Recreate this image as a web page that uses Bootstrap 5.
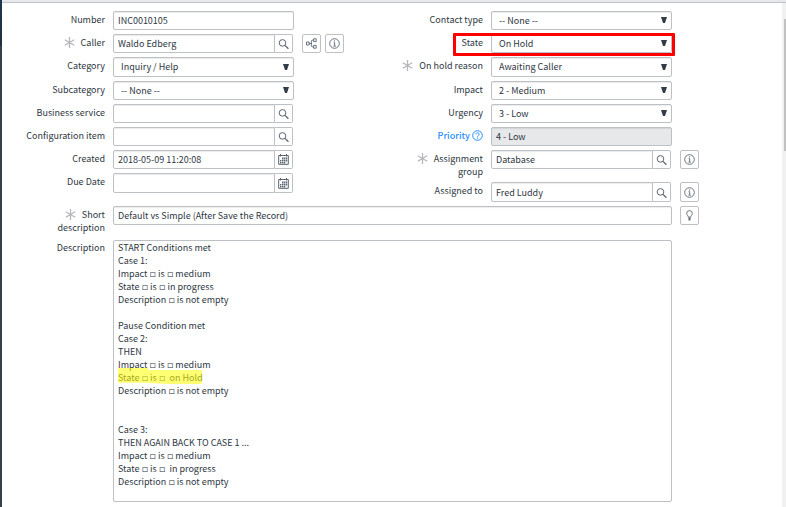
<!DOCTYPE html>
<html lang="en">
<head>
<meta charset="utf-8">
<meta name="viewport" content="width=device-width, initial-scale=1">
<title>Incident INC0010105</title>
<link href="https://cdn.jsdelivr.net/npm/bootstrap@5.3.0/dist/css/bootstrap.min.css" rel="stylesheet">
<style>
:root { --ink: #2e3742; --line: #bdc0c4; --glyph: #5a6570; }
body { font-family: "Noto Sans CJK SC", "DejaVu Sans", sans-serif; font-size: 9px; line-height: 13px; color: var(--ink); background: #fff; }
.edge-left { width: 2px; background: linear-gradient(#1d3650 0, #22303f 46px, #34424e 46px); }
.top-strip { height: 3px; background: #e6e8ea; border-bottom: 1px solid #bfc3cb; }
.scroll-track { width: 4px; background: #f1f1f1; padding: 16px 0 0 2px; }
.scroll-thumb { height: 132px; background: #c1c1c1; }
.record { padding-top: 8px; }
.columns { padding-right: 24px; }
.field { display: grid; grid-template-columns: 103px minmax(0, 1fr) 78px; column-gap: 8px; align-items: start; margin-bottom: 4px; position: relative; }
.field-wide { grid-template-columns: 103px minmax(0, 1fr) 102px; margin-bottom: 6px; }
.field > label, .field > .label-cell { text-align: right; padding-top: 2px; }
.field > .label-top { padding-top: 1px; }
.ctl { display: block; width: 100%; height: 19px; padding: 0 4px; border: 1px solid var(--line); border-radius: 2px; color: var(--ink); background-color: #fff; font: inherit; line-height: 13px; box-shadow: inset 0 1px 1px rgba(0,0,0,.08); }
.ctl:disabled { background-color: #e6e8ea; opacity: 1; }
select.ctl { appearance: none; padding-left: 7px; padding-bottom: 1px; background-image: url("data:image/svg+xml,%3Csvg xmlns='http://www.w3.org/2000/svg' viewBox='0 0 6 6'%3E%3Cpath d='M0 0h6L4 6H2z' fill='%23343d47'/%3E%3C/svg%3E"); background-repeat: no-repeat; background-size: 6px 6px; background-position: right 4px top 5px; }
.tall .ctl, .tall .icon-btn { height: 20px; }
.tall select.ctl { padding-bottom: 2px; background-position: right 4px top 6px; }
.lookup { margin-right: 1px; }
.lookup .ctl { border-radius: 2px 0 0 2px; }
.icon-btn { width: 19px; height: 19px; padding: 0; border: 1px solid var(--line); border-radius: 2px; background: #fff; color: var(--glyph); display: flex; align-items: center; justify-content: center; flex: none; }
.lookup .icon-btn { width: 18px; border-left: 0; border-radius: 0 2px 2px 0; }
.icon-btn svg { display: block; fill: none; stroke: currentColor; }
.req { width: 11px; height: 11px; stroke: #b4b7bb; fill: none; margin-right: 6px; vertical-align: -2px; }
.help-link { color: #278efc; text-decoration: none; font-weight: 500; }
.help-link svg { width: 11px; height: 11px; fill: none; stroke: currentColor; vertical-align: -2px; }
.callout-box { position: absolute; left: 73px; right: 83px; top: -1px; height: 23px; border: 3px solid #f00; border-radius: 1px; pointer-events: none; }
textarea.ctl { height: auto; resize: none; overflow: hidden; box-shadow: none; }
.marker { position: absolute; left: 5px; top: 128px; width: 84px; height: 16px; background: rgba(255,255,0,.55); pointer-events: none; clip-path: polygon(0 0, 36% 0, 36% 12%, 100% 12%, 100% 100%, 60% 100%, 30% 92%, 0 92%); }
</style>
</head>
<body>
<svg width="0" height="0" class="d-none" aria-hidden="true">
  <symbol id="i-star" viewBox="0 0 11 11"><path d="M5.5 0v11M.8 2.7l9.4 5.6M10.2 2.7L.8 8.3" stroke-width="1.3"/></symbol>
  <symbol id="i-search" viewBox="0 0 11 11"><circle cx="4.5" cy="4.9" r="3.3"/><path d="M7 7.4l3.4 3.4" stroke-width="1.3"/></symbol>
  <symbol id="i-info" viewBox="0 0 11 11"><circle cx="5.5" cy="5.5" r="4.8" stroke-width=".9"/><path d="M5.5 2.4v1.2M4.6 4.7h1.1v3.2M4.4 8.1h2.4" stroke-width=".9"/></symbol>
  <symbol id="i-tree" viewBox="0 0 11 11"><path d="M.5 4h2.6v3H.5zM7.6.8h2.6v2.8H7.6zM7.6 7.4h2.6v2.8H7.6zM3.1 5.5h2.2M7.6 2.2H6.4q-1 0-1 1v4.6q0 1 1 1h1.2" stroke-width=".9"/></symbol>
  <symbol id="i-cal" viewBox="0 0 11 11"><path d="M.7 1.5h9.6v8.8H.7zM2.5 0v2.5M8.5 0v2.5" stroke-width="1"/><path d="M4.7 3.5v2M6.6 3.5v2M8.5 3.5v2M2.7 6v1.4M4.7 6v1.4M6.6 6v1.4M8.5 6v1.4M2.7 8v1.4M4.7 8v1.4M6.6 8v1.4" stroke-width="1.4"/></symbol>
  <symbol id="i-bulb" viewBox="0 0 11 11"><path d="M4.3 7.2C4.3 5.5 2.7 5.2 2.7 3.4a2.8 2.8 0 0 1 5.6 0C8.3 5.2 6.7 5.5 6.7 7.2z" stroke-width=".9"/><path d="M5.5 7.5v3" stroke-width="2"/></symbol>
  <symbol id="i-help" viewBox="0 0 11 11"><circle cx="5.5" cy="5.5" r="4.8"/><path d="M3.9 4.4c0-2 3.3-2 3.3 0 0 1.2-1.7 1.1-1.7 2.4M5.5 7.6v1.1"/></symbol>
</svg>
<div class="d-flex min-vh-100">
  <div class="edge-left flex-shrink-0"></div>
  <div class="d-flex flex-column flex-grow-1">
    <div class="top-strip"></div>
    <div class="d-flex flex-grow-1">
      <form class="record flex-grow-1">
        <div class="columns row g-0">
          <div class="col-6">
            <div class="field"><label for="number">Number</label><input class="ctl" id="number" value="INC0010105"></div>
            <div class="field"><label for="caller"><svg class="req"><use href="#i-star"/></svg>Caller</label>
              <div class="lookup d-flex"><input class="ctl" id="caller" value="Waldo Edberg"><button type="button" class="icon-btn" aria-label="Look up caller"><svg width="11" height="11"><use href="#i-search"/></svg></button></div>
              <div class="d-flex gap-1"><button type="button" class="icon-btn" aria-label="Show related incidents"><svg width="11" height="11"><use href="#i-tree"/></svg></button><button type="button" class="icon-btn" aria-label="Preview caller"><svg width="11" height="11"><use href="#i-info"/></svg></button></div></div>
            <div class="field tall"><label for="category">Category</label><select class="ctl" id="category"><option>Inquiry / Help</option></select></div>
            <div class="field"><label for="subcategory">Subcategory</label><select class="ctl" id="subcategory"><option>-- None --</option></select></div>
            <div class="field"><label for="service">Business service</label>
              <div class="lookup d-flex"><input class="ctl" id="service"><button type="button" class="icon-btn" aria-label="Look up business service"><svg width="11" height="11"><use href="#i-search"/></svg></button></div></div>
            <div class="field"><label for="ci">Configuration item</label>
              <div class="lookup d-flex"><input class="ctl" id="ci"><button type="button" class="icon-btn" aria-label="Look up configuration item"><svg width="11" height="11"><use href="#i-search"/></svg></button></div></div>
            <div class="field"><label for="created">Created</label>
              <div class="lookup d-flex"><input class="ctl" id="created" value="2018-05-09 11:20:08"><button type="button" class="icon-btn" aria-label="Pick created date"><svg width="11" height="11"><use href="#i-cal"/></svg></button></div></div>
            <div class="field tall"><label for="due">Due Date</label>
              <div class="lookup d-flex"><input class="ctl" id="due"><button type="button" class="icon-btn" aria-label="Pick due date"><svg width="11" height="11"><use href="#i-cal"/></svg></button></div></div>
          </div>
          <div class="col-6">
            <div class="field"><label for="contact">Contact type</label><select class="ctl" id="contact"><option>-- None --</option></select></div>
            <div class="field"><label for="state">State</label><select class="ctl" id="state"><option>On Hold</option></select><div class="callout-box"></div></div>
            <div class="field tall"><label for="reason"><svg class="req"><use href="#i-star"/></svg>On hold reason</label><select class="ctl" id="reason"><option>Awaiting Caller</option></select></div>
            <div class="field"><label for="impact">Impact</label><select class="ctl" id="impact"><option>2 - Medium</option></select></div>
            <div class="field"><label for="urgency">Urgency</label><select class="ctl" id="urgency"><option>3 - Low</option></select></div>
            <div class="field"><div class="label-cell"><a class="help-link" href="#priority">Priority <svg><use href="#i-help"/></svg></a></div><input class="ctl" id="priority" aria-label="Priority" value="4 - Low" disabled></div>
            <div class="field"><label for="group"><svg class="req"><use href="#i-star"/></svg>Assignment<br>group</label>
              <div class="lookup d-flex"><input class="ctl" id="group" value="Database"><button type="button" class="icon-btn" aria-label="Look up assignment group"><svg width="11" height="11"><use href="#i-search"/></svg></button></div>
              <button type="button" class="icon-btn" aria-label="Preview assignment group"><svg width="11" height="11"><use href="#i-info"/></svg></button></div>
            <div class="field tall"><label for="assigned">Assigned to</label>
              <div class="lookup d-flex"><input class="ctl" id="assigned" value="Fred Luddy"><button type="button" class="icon-btn" aria-label="Look up assignee"><svg width="11" height="11"><use href="#i-search"/></svg></button></div>
              <button type="button" class="icon-btn" aria-label="Preview assignee"><svg width="11" height="11"><use href="#i-info"/></svg></button></div>
          </div>
        </div>
        <div class="field field-wide"><label for="short"><svg class="req"><use href="#i-star"/></svg>Short<br>description</label><input class="ctl" id="short" value="Default vs Simple (After Save the Record)"><button type="button" class="icon-btn" aria-label="Suggestions"><svg width="11" height="11"><use href="#i-bulb"/></svg></button></div>
        <div class="field field-wide"><label class="label-top" for="desc">Description</label>
          <div class="position-relative"><textarea class="ctl" id="desc" rows="20">START Conditions met
Case 1:
Impact ◽ is ◽ medium
State ◽ is ◽ in progress
Description ◽ is not empty

Pause Condition met
Case 2:
THEN
Impact ◽ is ◽ medium
State ◽ is ◽  on Hold
Description ◽ is not empty


Case 3:
THEN AGAIN BACK TO CASE 1 ...
Impact ◽ is ◽ medium
State ◽ is ◽  in progress
Description ◽ is not empty</textarea><div class="marker"></div></div></div>
      </form>
      <div class="scroll-track flex-shrink-0"><div class="scroll-thumb"></div></div>
    </div>
  </div>
</div>
<script src="https://cdn.jsdelivr.net/npm/bootstrap@5.3.0/dist/js/bootstrap.bundle.min.js"></script>
</body>
</html>
